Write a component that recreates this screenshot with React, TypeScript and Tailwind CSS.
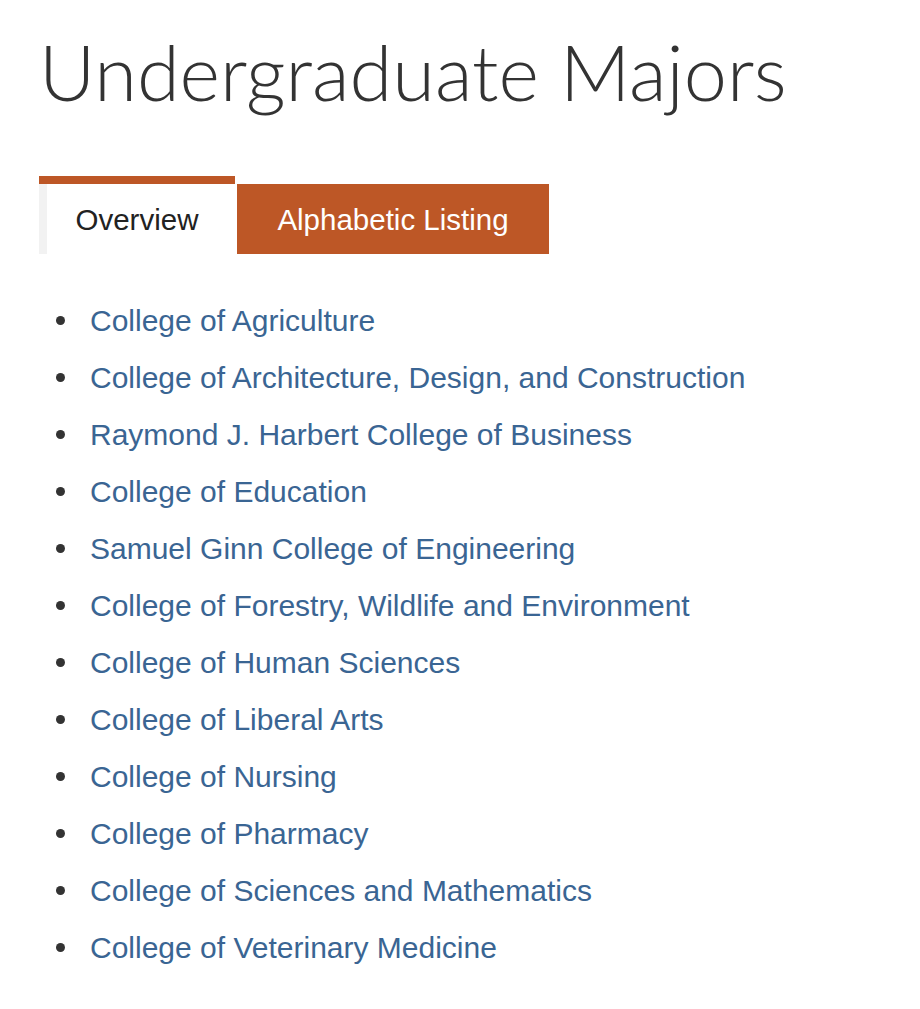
const colleges = [
  "College of Agriculture",
  "College of Architecture, Design, and Construction",
  "Raymond J. Harbert College of Business",
  "College of Education",
  "Samuel Ginn College of Engineering",
  "College of Forestry, Wildlife and Environment",
  "College of Human Sciences",
  "College of Liberal Arts",
  "College of Nursing",
  "College of Pharmacy",
  "College of Sciences and Mathematics",
  "College of Veterinary Medicine",
];

function Tabs() {
  return (
    <div className="mt-[65px] flex items-end gap-[2px] font-['Liberation_Sans',Arial,sans-serif] text-[29.5px]">
      <div className="flex w-[196px] flex-col">
        <div className="h-[8px] bg-[#bd5726]" />
        <button
          type="button"
          className="flex h-[70px] items-center justify-center bg-white pt-[3px] text-[#222] shadow-[inset_8px_0_0_#f2f2f2]"
        >
          Overview
        </button>
      </div>
      <button
        type="button"
        className="flex h-[70px] w-[312px] items-center justify-center bg-[#bd5726] pt-[3px] text-white"
      >
        Alphabetic Listing
      </button>
    </div>
  );
}

export default function App() {
  return (
    <div className="min-h-screen bg-white pl-[39px]">
      <h1 className="pt-[33px] font-['Lato',sans-serif] text-[77.5px] font-light leading-none text-[#333]">
        Undergraduate Majors
      </h1>
      <Tabs />
      <ul className="mt-[38px] font-['Liberation_Sans',Arial,sans-serif] text-[30px]">
        {colleges.map((name) => (
          <li key={name} className="flex h-[57px] items-center">
            <span className="ml-[17px] mr-[25px] h-[9px] w-[9px] rounded-full bg-[#333]" />
            <a href="#" className="text-[#3a6593]">
              {name}
            </a>
          </li>
        ))}
      </ul>
    </div>
  );
}
